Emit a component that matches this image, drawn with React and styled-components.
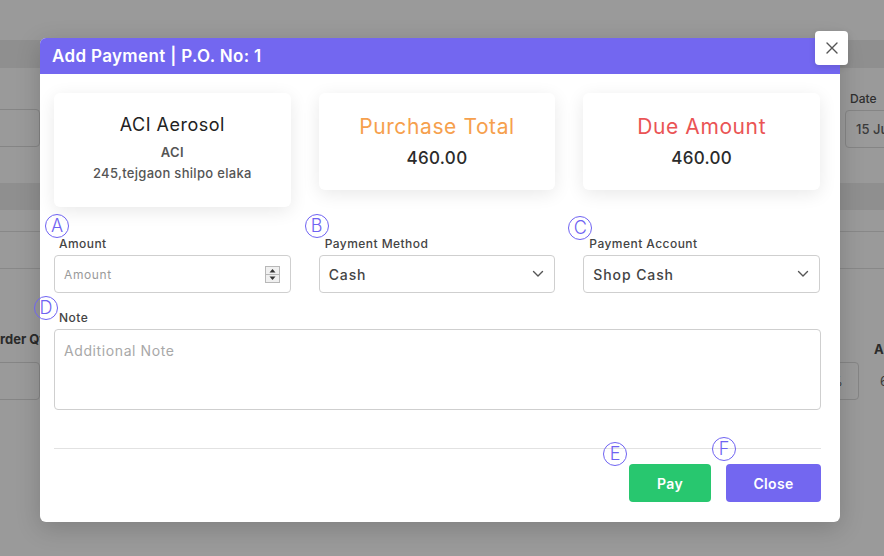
import React from 'react';
import styled, { createGlobalStyle } from 'styled-components';

const GlobalStyle = createGlobalStyle`
  html, body {
    margin: 0;
    padding: 0;
    background: #9a9a9a;
  }
  * {
    box-sizing: border-box;
  }
  body {
    font-family: Inter, "Open Sans", "Liberation Sans", sans-serif;
  }
`;

// Background page (dimmed behind the modal)
const Screen = styled.div`
  position: relative;
  width: 884px;
  height: 556px;
  overflow: hidden;
  background: #9a9a9a;
`;

const BgPage = styled.div`
  display: flex;
  flex-direction: column;
`;

const BgBand = styled.div`
  height: ${props => props.h}px;
  background: ${props => props.dark ? '#8f8f8f' : '#9a9a9a'};
  border-bottom: ${props => props.line ? '1px solid #888' : 'none'};
`;

const BgRow = styled.div`
  display: flex;
  align-items: flex-end;
  margin-left: ${props => props.ml || 0}px;
  height: ${props => props.h}px;
`;

const BgCell = styled.div`
  flex: 0 0 ${props => props.w}px;
  display: flex;
  align-items: center;
  gap: ${props => props.gap || 0}px;
  margin-bottom: ${props => props.mb || 0}px;
  color: #3a3a3a;
  font-size: 13px;
  white-space: nowrap;
`;

const BgBox = styled.div`
  width: ${props => props.w}px;
  height: 38px;
  border: 1px solid #858585;
  border-radius: 4px;
  color: #3a3a3a;
  font-size: 13px;
  display: flex;
  align-items: center;
  padding-left: 10px;
  white-space: nowrap;
  overflow: hidden;
  flex-shrink: 0;
`;

const BgField = styled.div`
  display: flex;
  flex-direction: column;
  gap: 4px;
  font-size: 12px;
  color: #2f2f2f;
  font-weight: 500;
  white-space: nowrap;
`;

const BgLabel = styled.span`
  padding-left: 5px;
`;

const BgHead = styled.div`
  font-size: 13px;
  font-weight: 700;
  color: #2a2a2a;
  white-space: nowrap;
`;

// Modal
const Modal = styled.div`
  position: absolute;
  left: 40px;
  top: 38px;
  width: 800px;
  background: #fff;
  border-radius: 6px;
  box-shadow: 0 6px 24px rgba(0, 0, 0, 0.18);
`;

const ModalHeader = styled.div`
  height: 36px;
  background: #7367f0;
  border-radius: 6px 6px 0 0;
  display: flex;
  align-items: center;
  padding-left: 12px;
  color: #fff;
  font-size: 17px;
  font-weight: 600;
  letter-spacing: 0.35px;
`;

const CloseX = styled.button`
  position: absolute;
  right: -8px;
  top: -7px;
  width: 33px;
  height: 34px;
  border: none;
  border-radius: 4px;
  background: #fff;
  box-shadow: 0 2px 6px rgba(0, 0, 0, 0.12);
  display: flex;
  align-items: center;
  justify-content: center;
  padding: 0;
`;

const ModalBody = styled.div`
  padding: 19px 19px 20px 14px;
`;

const CardGrid = styled.div`
  display: grid;
  grid-template-columns: repeat(3, 1fr);
  column-gap: 28px;
  align-items: start;
  margin-right: 1px;
`;

const InfoCard = styled.div`
  background: #fff;
  border-radius: 6px;
  box-shadow: 0 4px 18px rgba(0, 0, 0, 0.09);
  text-align: center;
  padding: ${props => props.tall ? '21px 6px 23px' : '22px 6px 21px'};
`;

const CardTitle = styled.div`
  font-size: ${props => props.big ? 21 : 18}px;
  line-height: ${props => props.big ? 24 : 22}px;
  font-weight: 400;
  color: ${props => props.color || '#222'};
  letter-spacing: ${props => props.big ? '0.6px' : '0.5px'};
`;

const CardValue = styled.div`
  margin-top: 9px;
  font-size: 17px;
  line-height: 21px;
  font-weight: 500;
  letter-spacing: 0.3px;
  color: #2b2b2b;
`;

const CardSub = styled.div`
  font-size: 13px;
  line-height: 21px;
  font-weight: ${props => props.bold ? 600 : 500};
  letter-spacing: 0.3px;
  color: #555;
  margin-top: ${props => props.first ? 6 : 0}px;
`;

const FieldGrid = styled.div`
  display: grid;
  grid-template-columns: repeat(3, 1fr);
  column-gap: 28px;
  margin-top: 29px;
  margin-right: 1px;
`;

const FieldGroup = styled.div`
  position: relative;
  display: flex;
  flex-direction: column;
  margin-top: ${props => props.mt || 0}px;
`;

const Label = styled.label`
  font-size: 12px;
  line-height: 16px;
  font-weight: 500;
  letter-spacing: 0.45px;
  color: #444;
  padding-left: ${props => props.indent || 5}px;
  margin-bottom: 3px;
`;

const InputBox = styled.div`
  height: 38px;
  border: 1px solid #cfcfcf;
  border-radius: 4px;
  display: flex;
  align-items: center;
  justify-content: space-between;
  padding: 0 10px 0 9px;
  font-size: ${props => props.placeholder ? 12 : 14}px;
  font-weight: ${props => props.placeholder ? 400 : 500};
  letter-spacing: ${props => props.placeholder ? '0.6px' : '0.9px'};
  color: ${props => props.placeholder ? '#9a9a9a' : '#444'};
`;

const NoteBox = styled.div`
  height: 81px;
  border: 1px solid #cfcfcf;
  border-radius: 4px;
  padding: 12px 9px;
  font-size: 14px;
  font-weight: 400;
  letter-spacing: 0.6px;
  color: #a8a8a8;
`;

const Marker = styled.span`
  position: absolute;
  left: ${props => props.x}px;
  top: ${props => props.y}px;
  width: 24px;
  height: 24px;
  border: 1px solid #6f63f2;
  border-radius: 50%;
  display: flex;
  align-items: center;
  justify-content: center;
  font-size: 18px;
  font-weight: 300;
  color: #6f63f2;
  line-height: 1;
  z-index: 2;
`;

const Divider = styled.div`
  height: 1px;
  background: #e2e2e2;
  margin-top: 38px;
`;

const Footer = styled.div`
  display: flex;
  justify-content: flex-end;
  gap: 15px;
  margin-top: 15px;
`;

const ActionWrap = styled.div`
  position: relative;
`;

const Button = styled.button`
  height: 38px;
  width: ${props => props.w}px;
  border: none;
  border-radius: 4px;
  background: ${props => props.variant === 'success' ? '#28c76f' : '#7367f0'};
  color: #fff;
  font-family: inherit;
  font-size: 14px;
  font-weight: 600;
  letter-spacing: 0.3px;
`;

const Spinner = () => (
  <svg width="15" height="17" viewBox="0 0 15 17">
    <rect x="0.5" y="0.5" width="14" height="16" fill="#f0f0f0" stroke="#b8b8b8" />
    <line x1="1" y1="8.5" x2="14" y2="8.5" stroke="#b8b8b8" />
    <path d="M4.5 6.5 L7.5 3 L10.5 6.5 Z" fill="#333" />
    <path d="M4.5 10.5 L7.5 14 L10.5 10.5 Z" fill="#333" />
  </svg>
);

const Chevron = () => (
  <svg width="12" height="8" viewBox="0 0 12 8">
    <path d="M1.5 1.5 L6 6 L10.5 1.5" fill="none" stroke="#555" strokeWidth="1.4" strokeLinecap="round" strokeLinejoin="round" />
  </svg>
);

const CloseIcon = () => (
  <svg width="12" height="12" viewBox="0 0 12 12">
    <path d="M1 1 L11 11 M11 1 L1 11" stroke="#555" strokeWidth="1.4" strokeLinecap="round" />
  </svg>
);

export default function App() {
  return (
    <>
      <GlobalStyle />
      <Screen>
        <BgPage>
          <BgBand h={40} />
          <BgBand h={28} dark />
          <BgRow h={80} ml={-20}>
            <BgCell w={865} mb={1}>
              <BgBox w={60} />
            </BgCell>
            <BgCell w={120}>
              <BgField>
                <BgLabel>Date</BgLabel>
                <BgBox w={100}>15 Jun 2023</BgBox>
              </BgField>
            </BgCell>
          </BgRow>
          <BgBand h={35} />
          <BgBand h={27} dark />
          <BgBand h={22} line />
          <BgBand h={37} line />
          <BgRow h={78} ml={-10}>
            <BgCell w={884}>
              <BgHead>Order Qty</BgHead>
            </BgCell>
            <BgCell w={80} mb={-10}>
              <BgHead>Amount</BgHead>
            </BgCell>
          </BgRow>
          <BgRow h={53} ml={-20}>
            <BgCell w={839}>
              <BgBox w={60} />
            </BgCell>
            <BgCell w={120} gap={21}>
              <BgBox w={40}>%</BgBox>
              <span>60.00</span>
            </BgCell>
          </BgRow>
        </BgPage>

        <Modal>
          <ModalHeader>Add Payment | P.O. No: 1</ModalHeader>
          <CloseX aria-label="close"><CloseIcon /></CloseX>
          <ModalBody>
            <CardGrid>
              <InfoCard tall>
                <CardTitle>ACI Aerosol</CardTitle>
                <CardSub bold first>ACI</CardSub>
                <CardSub>245,tejgaon shilpo elaka</CardSub>
              </InfoCard>
              <InfoCard>
                <CardTitle big color="#f6a04d">Purchase Total</CardTitle>
                <CardValue>460.00</CardValue>
              </InfoCard>
              <InfoCard>
                <CardTitle big color="#ea5455">Due Amount</CardTitle>
                <CardValue>460.00</CardValue>
              </InfoCard>
            </CardGrid>

            <FieldGrid>
              <FieldGroup>
                <Marker x={-9} y={-22}>A</Marker>
                <Label>Amount</Label>
                <InputBox placeholder="true">
                  Amount
                  <Spinner />
                </InputBox>
              </FieldGroup>
              <FieldGroup>
                <Marker x={-14} y={-22}>B</Marker>
                <Label indent={6}>Payment Method</Label>
                <InputBox>
                  Cash
                  <Chevron />
                </InputBox>
              </FieldGroup>
              <FieldGroup>
                <Marker x={-15} y={-20}>C</Marker>
                <Label indent={6}>Payment Account</Label>
                <InputBox>
                  Shop Cash
                  <Chevron />
                </InputBox>
              </FieldGroup>
            </FieldGrid>

            <FieldGroup mt={17}>
              <Marker x={-20} y={-14}>D</Marker>
              <Label>Note</Label>
              <NoteBox>Additional Note</NoteBox>
            </FieldGroup>

            <Divider />

            <Footer>
              <ActionWrap>
                <Marker x={-26} y={-22}>E</Marker>
                <Button variant="success" w={82}>Pay</Button>
              </ActionWrap>
              <ActionWrap>
                <Marker x={-14} y={-27}>F</Marker>
                <Button w={95}>Close</Button>
              </ActionWrap>
            </Footer>
          </ModalBody>
        </Modal>
      </Screen>
    </>
  );
}
